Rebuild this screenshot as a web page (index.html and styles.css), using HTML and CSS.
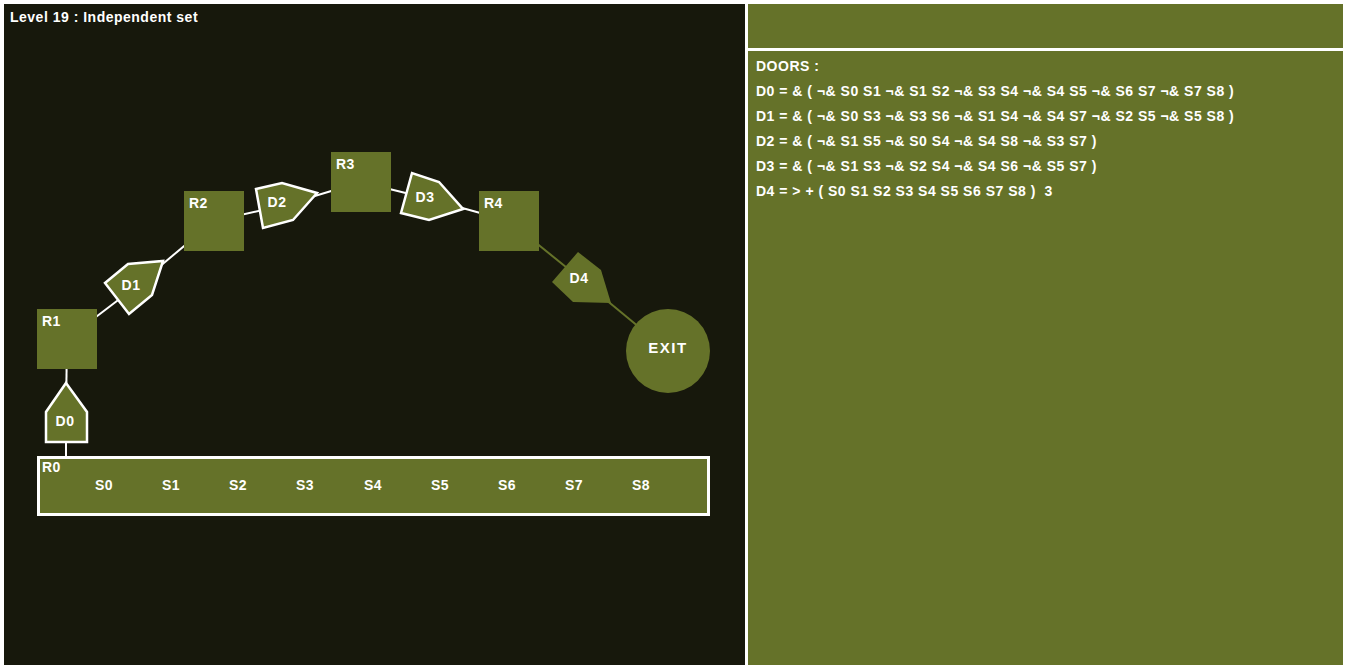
FILE: index.html
```html
<!DOCTYPE html>
<html lang="en">
<head>
    <meta charset="UTF-8">
    <title>Level 19 : Independent set</title>
    <link rel="stylesheet" href="styles.css">
</head>
<body>
    <div class="screen">
        <div class="board">
            <div class="level-title">Level 19 : Independent set</div>

            <!-- map of rooms and doors, viewBox uses page coordinates -->
            <svg class="map" viewBox="4 4 741 661" width="741" height="661">
                <g class="links">
                    <line x1="67" y1="339" x2="66" y2="412"/>
                    <line x1="66" y1="412" x2="66" y2="486"/>
                    <line x1="67" y1="339" x2="134" y2="288"/>
                    <line x1="134" y1="288" x2="214" y2="221"/>
                    <line x1="214" y1="221" x2="285" y2="205"/>
                    <line x1="285" y1="205" x2="361" y2="182"/>
                    <line x1="361" y1="182" x2="430" y2="199"/>
                    <line x1="430" y1="199" x2="509" y2="221"/>
                </g>
                <g class="links open">
                    <line x1="509" y1="221" x2="582" y2="280"/>
                    <line x1="582" y1="280" x2="668" y2="351"/>
                </g>

                <rect class="room start" x="38.5" y="457.5" width="670" height="57"/>
                <rect class="room" x="37" y="309" width="60" height="60"/>
                <rect class="room" x="184" y="191" width="60" height="60"/>
                <rect class="room" x="331" y="152" width="60" height="60"/>
                <rect class="room" x="479" y="191" width="60" height="60"/>
                <circle class="room" cx="668" cy="351" r="42"/>

                <polygon class="door" points="66,383 87,412 87,442 46,442 46,412"/>
                <polygon class="door" points="163,261 152,295 129,314 105,283 128,264"/>
                <polygon class="door" points="317,193 293,220 263,228 256,189 282,183"/>
                <polygon class="door" points="463,209 429,220 401,213 412,173 439,182"/>
                <polygon class="door open" points="611,303 573,302 552,282 578,252 601,270"/>

                <g class="labels">
                    <text x="42" y="326">R1</text>
                    <text x="189" y="208">R2</text>
                    <text x="336" y="169">R3</text>
                    <text x="484" y="208">R4</text>
                    <text x="42" y="472">R0</text>
                </g>
                <g class="labels mid">
                    <text x="65" y="426">D0</text>
                    <text x="131" y="290">D1</text>
                    <text x="277" y="207">D2</text>
                    <text x="425" y="202">D3</text>
                    <text x="579" y="283">D4</text>
                    <text class="exit" x="668" y="353">EXIT</text>
                    <text x="104" y="490">S0</text>
                    <text x="171" y="490">S1</text>
                    <text x="238" y="490">S2</text>
                    <text x="305" y="490">S3</text>
                    <text x="373" y="490">S4</text>
                    <text x="440" y="490">S5</text>
                    <text x="507" y="490">S6</text>
                    <text x="574" y="490">S7</text>
                    <text x="641" y="490">S8</text>
                </g>
            </svg>
        </div>

        <div class="side">
            <div class="side-top"></div>
            <div class="side-doors">
                <div class="line">DOORS :</div>
                <div class="line">D0 = &amp; ( ¬&amp; S0 S1 ¬&amp; S1 S2 ¬&amp; S3 S4 ¬&amp; S4 S5 ¬&amp; S6 S7 ¬&amp; S7 S8 )</div>
                <div class="line">D1 = &amp; ( ¬&amp; S0 S3 ¬&amp; S3 S6 ¬&amp; S1 S4 ¬&amp; S4 S7 ¬&amp; S2 S5 ¬&amp; S5 S8 )</div>
                <div class="line">D2 = &amp; ( ¬&amp; S1 S5 ¬&amp; S0 S4 ¬&amp; S4 S8 ¬&amp; S3 S7 )</div>
                <div class="line">D3 = &amp; ( ¬&amp; S1 S3 ¬&amp; S2 S4 ¬&amp; S4 S6 ¬&amp; S5 S7 )</div>
                <div class="line">D4 = &gt; + ( S0 S1 S2 S3 S4 S5 S6 S7 S8 )&nbsp; 3</div>
            </div>
        </div>
    </div>
</body>
</html>
```

FILE: styles.css
```css
* {
    margin: 0;
    padding: 0;
    box-sizing: border-box;
}

body {
    background: #ffffff;
    font-family: 'Liberation Sans', Arial, sans-serif;
    font-weight: bold;
    font-size: 14px;
    letter-spacing: 0.5px;
    color: #ffffff;
}

.screen {
    display: flex;
    gap: 3px;
    padding: 4px 3px 3px 4px;
    height: 668px;
}

.board {
    position: relative;
    width: 741px;
    flex: none;
    background: #17180c;
}

.level-title {
    position: relative;
    z-index: 1;
    padding: 5px 0 0 6px;
    line-height: 16px;
}

.map {
    position: absolute;
    left: 0;
    top: 0;
}

.links line {
    stroke: #ffffff;
    stroke-width: 2;
}

.links.open line {
    stroke: #657229;
}

.room {
    fill: #657229;
}

.room.start {
    stroke: #ffffff;
    stroke-width: 3;
}

.door {
    fill: #657229;
    stroke: #ffffff;
    stroke-width: 2.5;
    stroke-linejoin: miter;
}

.door.open {
    stroke: none;
}

.labels text {
    fill: #ffffff;
    font-family: 'Liberation Sans', Arial, sans-serif;
    font-weight: bold;
    font-size: 14px;
    letter-spacing: 0.5px;
}

.labels.mid text {
    text-anchor: middle;
}

.labels .exit {
    font-size: 15px;
    letter-spacing: 1.5px;
}

.side {
    flex: 1;
    display: flex;
    flex-direction: column;
    gap: 3px;
}

.side-top {
    height: 44px;
    background: #657229;
}

.side-doors {
    flex: 1;
    background: #657229;
    padding: 7px 0 0 8px;
}

.side-doors .line {
    height: 25px;
    line-height: 16px;
}
```
